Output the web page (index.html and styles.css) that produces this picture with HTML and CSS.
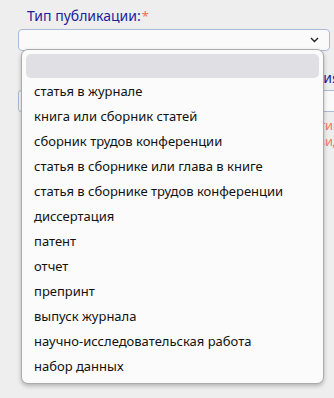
FILE: index.html
```html
<!DOCTYPE html>
<html lang="ru">
<head>
    <meta charset="UTF-8">
    <meta name="viewport" content="width=device-width, initial-scale=1.0">
    <title>Тип публикации</title>
    <link rel="stylesheet" href="styles.css">
</head>
<body>
    <div class="form">
        <div class="field">
            <label class="field-label">Тип публикации:<span class="req">*</span></label>
            <div class="select">
                <svg class="chevron" width="9" height="6" viewBox="0 0 9 6"><path d="M1 1 L4.5 4.5 L8 1" fill="none" stroke="#222" stroke-width="1.4"/></svg>
            </div>
        </div>
        <div class="field field-second">
            <label class="field-label second-label">Полное название издания</label>
            <div class="text-input"></div>
            <div class="hint">
                <span class="hint-line">Необходимо указать тип</span>
                <span class="hint-line">публикации и её вид</span>
            </div>
        </div>
    </div>

    <ul class="dropdown">
        <li class="option empty"></li>
        <li class="option">статья в журнале</li>
        <li class="option">книга или сборник статей</li>
        <li class="option">сборник трудов конференции</li>
        <li class="option">статья в сборнике или глава в книге</li>
        <li class="option">статья в сборнике трудов конференции</li>
        <li class="option">диссертация</li>
        <li class="option">патент</li>
        <li class="option">отчет</li>
        <li class="option">препринт</li>
        <li class="option">выпуск журнала</li>
        <li class="option">научно-исследовательская работа</li>
        <li class="option">набор данных</li>
    </ul>
</body>
</html>
```

FILE: styles.css
```css
body {
    font-family: 'Noto Sans', 'Open Sans', sans-serif;
    margin: 0;
    padding: 0;
    background: #eeeeee;
    overflow: hidden;
    height: 398px;
}
.form {
    padding: 6px 0 0 18px;
    width: 316px;
    overflow: hidden;
}
.field-label {
    display: block;
    padding-left: 9px;
    font-size: 14px;
    line-height: 20px;
    color: #1d1d9e;
    white-space: nowrap;
}
.req {
    color: #f0704f;
    vertical-align: top;
    font-size: 13px;
    margin-left: 1px;
}
.select {
    margin-top: 3px;
    width: 300px;
    height: 20px;
    border: 1px solid #a9bcd6;
    border-radius: 4px;
    background: #fafafa;
    display: flex;
    justify-content: flex-end;
    align-items: center;
    padding-right: 10px;
}
.field-second {
    margin-top: 17px;
}
.second-label {
    width: 322px;
    padding-left: 0;
    text-align: right;
}
.text-input {
    margin-top: 2px;
    height: 20px;
    width: 340px;
    border: 1px solid #a9bcd6;
    border-radius: 3px;
    background: #fafafa;
}
.hint {
    margin-top: 5px;
    width: 323px;
    display: flex;
    flex-direction: column;
    align-items: flex-end;
    font-size: 13px;
    line-height: 16px;
    color: #f4786a;
}
.hint-line {
    white-space: nowrap;
}
.dropdown {
    position: absolute;
    left: 21px;
    top: 49px;
    width: 293px;
    margin: 0;
    padding: 4px 4px;
    list-style: none;
    background: #fbfbfb;
    border: 1px solid #ababab;
    border-radius: 7px;
    box-shadow: 0 2px 4px rgba(0, 0, 0, 0.25);
}
.option {
    height: 25px;
    line-height: 25px;
    padding-left: 8px;
    font-size: 13px;
    color: #111111;
}
.option.empty {
    height: 24px;
    margin-bottom: 1px;
    background: #dfdfe4;
    border-radius: 5px;
}
```
